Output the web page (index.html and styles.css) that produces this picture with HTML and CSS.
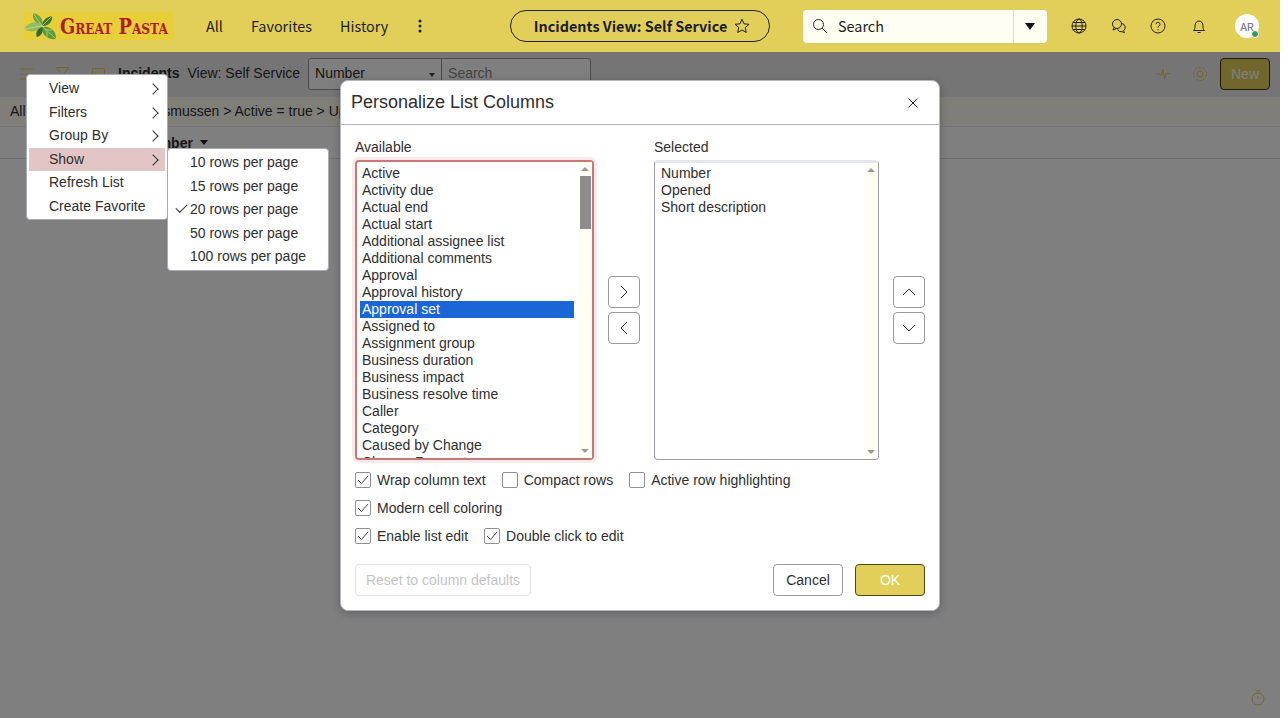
FILE: index.html
```html
<!DOCTYPE html>
<html lang="en">
  <head>
    <meta charset="UTF-8" />
    <meta name="viewport" content="width=device-width, initial-scale=1.0" />
    <title>Incidents View: Self Service</title>
    <link rel="stylesheet" href="styles.css">
  </head>
  <body>
    <div class="app">
      <header class="topbar">
        <div class="logo">
          <svg class="logo-leaf" width="34" height="28" viewBox="0 0 34 28">
            <path d="M9 1C15 2 20 7 18 14C12 12 8 7 9 1Z" fill="#6ea345" />
            <path d="M28 4C29 9 25 14 18 14C18 9 22 5 28 4Z" fill="#3f7a2c" />
            <path d="M0 17C5 9 14 8 19 14C15 20 6 21 0 17Z" fill="#93bd5c" />
            <path d="M18 15C26 13 33 20 32 27C24 28 17 23 18 15Z" fill="#5e9a3e" />
            <path d="M18 15C13 17 11 21 13 25C17 24 20 20 18 15Z" fill="#35692a" />
            <path d="M0 17L18 14L32 27M18 14L9 1M18 14L28 4M21 18L28 18M23 20L23 26" fill="none" stroke="#d5e5a8" stroke-width=".6" />
          </svg>
          <span class="logo-text">Great Pasta</span>
        </div>
        <nav class="topnav">
          <span>All</span>
          <span>Favorites</span>
          <span>History</span>
          <svg width="4" height="14" viewBox="0 0 4 14"><circle cx="2" cy="2" r="1.5" /><circle cx="2" cy="7" r="1.5" /><circle cx="2" cy="12" r="1.5" /></svg>
        </nav>
        <div class="pill">
          <b>Incidents View: Self Service</b>
          <svg width="16" height="16" viewBox="0 0 16 16"><path d="M8 1.2l2 4.6 5 .5-3.8 3.3 1.1 4.9L8 12l-4.3 2.5 1.1-4.9L1 6.3l5-.5z" fill="none" stroke="#222" /></svg>
        </div>
        <div class="search">
          <svg width="16" height="16" viewBox="0 0 16 16"><circle cx="6.5" cy="6.5" r="5" fill="none" stroke="#222" /><path d="M10.2 10.2L15 15" stroke="#222" /></svg>
          <span class="search-text">Search</span>
          <span class="search-drop"><i class="caret"></i></span>
        </div>
        <div class="top-icons">
          <svg width="16" height="16" viewBox="0 0 16 16" fill="none" stroke="#222"><circle cx="8" cy="8" r="7" /><ellipse cx="8" cy="8" rx="3.2" ry="7" /><path d="M1 8h14M2 4.5h12M2 11.5h12" /></svg>
          <svg width="16" height="16" viewBox="0 0 16 16" fill="none" stroke="#222"><circle cx="6" cy="6" r="4.5" /><path d="M3 9.5L2 12l3-1.200" /><path d="M11 5.500a4 4 0 0 1 1.500 7.200l1 2-2.500-1a4 4 0 0 1-4.500-2.500" /></svg>
          <svg class="icon-help" width="16" height="16" viewBox="0 0 16 16" fill="none" stroke="#222"><circle cx="8" cy="8" r="7" /><path d="M6 6.200a2 2 0 1 1 3 1.800c-.7.400-1 .9-1 1.700M8 11.200v1.200" /></svg>
          <svg width="16" height="16" viewBox="0 0 16 16" fill="none" stroke="#222"><path d="M2.500 12.500h11c-1.200-1-1.500-2-1.500-4.500 0-2.800-1.500-5-4-5S4 5.200 4 8c0 2.500-.3 3.500-1.500 4.500zM6.500 14.500h3" /></svg>
          <span class="avatar">AR<i class="avatar-dot"></i></span>
        </div>
      </header>

      <main class="page">
        <div class="toolbar">
          <svg class="dim-icon" width="13" height="14" viewBox="0 0 13 14"><path d="M0 2h13M0 7h9M0 12h6" /></svg>
          <svg class="dim-icon" width="13" height="16" viewBox="0 0 13 16"><path d="M.5 1.500h12L8 8v6L5 12V8z" /></svg>
          <svg class="dim-icon" width="13" height="16" viewBox="0 0 13 16"><rect x=".5" y="2.500" width="12" height="12" rx="1" /><path d="M3 6h1M6 6h1M9 6h1M3 9h1M6 9h1M9 9h1" /></svg>
          <b class="list-name">Incidents</b>
          <span class="list-view">View: Self Service</span>
          <div class="field-select">Number<i class="caret-small"></i></div>
          <div class="field-search">Search</div>
          <div class="toolbar-right">
            <svg class="dim-icon" width="16" height="16" viewBox="0 0 16 16"><path d="M1 8h4l1.500 1.500L8 3l1.500 10L11 7.500h4" /></svg>
            <svg class="dim-icon" width="16" height="16" viewBox="0 0 16 16"><circle cx="8" cy="8" r="3" /><circle cx="8" cy="8" r="6.500" stroke-dasharray="3 1" /></svg>
            <button class="btn-new">New</button>
          </div>
        </div>
        <div class="crumbs">All &gt; Assignee = Abel Rasmussen &gt; Active = true &gt; Upload</div>
        <div class="col-head"><b>Number</b><i class="caret-head"></i></div>
        <svg class="dim-icon timer" width="14" height="16" viewBox="0 0 14 16"><circle cx="7" cy="9" r="6" /><path d="M7 6v3M5 1h4" /></svg>
      </main>

      <div class="overlay">
        <section class="modal">
          <div class="modal-head">
            <h2>Personalize List Columns</h2>
            <svg width="12" height="12" viewBox="0 0 12 12"><path d="M1.500 1.500l9 9M10.500 1.500l-9 9" stroke="#222" /></svg>
          </div>
          <div class="modal-body">
            <div class="pickers">
              <div class="picker picker-available">
                <label>Available</label>
                <div class="listbox listbox-focus">
                  <ul>
                    <li>Active</li>
                    <li>Activity due</li>
                    <li>Actual end</li>
                    <li>Actual start</li>
                    <li>Additional assignee list</li>
                    <li>Additional comments</li>
                    <li>Approval</li>
                    <li>Approval history</li>
                    <li class="picked">Approval set</li>
                    <li>Assigned to</li>
                    <li>Assignment group</li>
                    <li>Business duration</li>
                    <li>Business impact</li>
                    <li>Business resolve time</li>
                    <li>Caller</li>
                    <li>Category</li>
                    <li>Caused by Change</li>
                    <li>Change Request</li>
                  </ul>
                  <div class="scroll">
                    <i class="arrow-up"></i>
                    <span class="thumb"></span>
                    <i class="arrow-down"></i>
                  </div>
                </div>
              </div>
              <div class="movers">
                <button class="square"><svg width="12" height="14" viewBox="0 0 12 14"><path d="M3 1l6 6-6 6" /></svg></button>
                <button class="square"><svg width="12" height="14" viewBox="0 0 12 14"><path d="M9 1L3 7l6 6" /></svg></button>
              </div>
              <div class="picker picker-selected">
                <label>Selected</label>
                <div class="listbox listbox-plain">
                  <ul>
                    <li>Number</li>
                    <li>Opened</li>
                    <li>Short description</li>
                  </ul>
                  <div class="scroll">
                    <i class="arrow-up"></i>
                    <span class="thumb thumb-none"></span>
                    <i class="arrow-down"></i>
                  </div>
                </div>
              </div>
              <div class="movers">
                <button class="square"><svg width="14" height="12" viewBox="0 0 14 12"><path d="M1 9l6-6 6 6" /></svg></button>
                <button class="square"><svg width="14" height="12" viewBox="0 0 14 12"><path d="M1 3l6 6 6-6" /></svg></button>
              </div>
            </div>

            <div class="options">
              <div class="option-row">
                <span class="check on">Wrap column text</span>
                <span class="check">Compact rows</span>
                <span class="check">Active row highlighting</span>
              </div>
              <div class="option-row">
                <span class="check on">Modern cell coloring</span>
              </div>
              <div class="option-row">
                <span class="check on">Enable list edit</span>
                <span class="check on">Double click to edit</span>
              </div>
            </div>

            <div class="modal-foot">
              <button class="btn btn-reset">Reset to column defaults</button>
              <button class="btn btn-cancel">Cancel</button>
              <button class="btn btn-ok">OK</button>
            </div>
          </div>
        </section>
      </div>

      <ul class="menu menu-main">
        <li>View</li>
        <li>Filters</li>
        <li>Group By</li>
        <li class="active">Show</li>
        <li class="plain">Refresh List</li>
        <li class="plain">Create Favorite</li>
      </ul>
      <ul class="menu menu-sub">
        <li>10 rows per page</li>
        <li>15 rows per page</li>
        <li class="checked">20 rows per page</li>
        <li>50 rows per page</li>
        <li>100 rows per page</li>
      </ul>
    </div>
  </body>
</html>
```

FILE: styles.css
```css
*,
*::before,
*::after {
  box-sizing: border-box;
}

html,
body {
  margin: 0;
  padding: 0;
  height: 100%;
  overflow: hidden;
}

body {
  font-family: "Liberation Sans", Arial, sans-serif;
  font-size: 14px;
  color: #2e2e2e;
  background: #fff;
}

.app {
  position: relative;
  width: 1280px;
  height: 718px;
  overflow: hidden;
}

/* top bar */
.topbar {
  display: flex;
  align-items: center;
  height: 52px;
  padding-left: 24px;
  background-color: #e2cf5a;
  font-family: "Noto Sans CJK JP", "Noto Sans", sans-serif;
  font-size: 14.4px;
  color: #1c1c1c;
  position: relative;
  z-index: 3;
}

.logo {
  display: flex;
  align-items: center;
  flex: none;
  width: 150px;
  height: 28px;
  background-color: #e8cf38;
}

.logo-leaf {
  flex: none;
}

.logo-text {
  display: inline-block;
  margin-left: 2px;
  font-family: "DejaVu Serif", "Liberation Serif", serif;
  font-stretch: condensed;
  font-weight: bold;
  font-variant: small-caps;
  font-size: 22px;
  color: #b01b22;
  white-space: nowrap;
  transform: scaleX(0.9);
  transform-origin: left center;
}

.topnav {
  display: flex;
  align-items: center;
  flex: none;
  gap: 28px;
  margin-left: 32px;
  width: 304px;
}

.topnav span,
.pill b,
.search-text {
  padding-bottom: 2px;
}

.topnav svg {
  margin-left: 2px;
  fill: #1c1c1c;
}

.pill {
  display: flex;
  align-items: center;
  justify-content: center;
  flex: none;
  gap: 7px;
  width: 260px;
  height: 32px;
  padding-left: 4px;
  border: 1px solid #222;
  border-radius: 16px;
}

.search {
  display: flex;
  align-items: center;
  flex: none;
  width: 244px;
  height: 33px;
  margin-left: 33px;
  padding-left: 9px;
  background-color: #fffef3;
  border-radius: 4px;
  box-shadow: 0 0 1px #bbb;
}

.search-text {
  flex: 1;
  margin-left: 10px;
}

.search-drop {
  display: flex;
  align-items: center;
  justify-content: center;
  width: 34px;
  height: 100%;
  padding-right: 1px;
  border-left: 1px solid #dedcc8;
}

.caret {
  width: 0;
  height: 0;
  border-left: 5.5px solid transparent;
  border-right: 5.5px solid transparent;
  border-top: 7px solid #111;
}

.top-icons {
  display: flex;
  align-items: center;
  gap: 24px;
  margin-left: 24px;
}

.icon-help {
  margin-left: -1px;
  margin-right: 1px;
}

.avatar {
  position: relative;
  display: flex;
  align-items: center;
  justify-content: center;
  width: 24px;
  height: 24px;
  margin-left: 4px;
  border-radius: 50%;
  background-color: #fff;
  font-size: 11px;
  color: #667;
}

.avatar-dot {
  position: absolute;
  right: 0;
  bottom: 0;
  width: 8px;
  height: 8px;
  border-radius: 50%;
  border: 1px solid #fff;
  background-color: #2e9e5b;
}

/* list page behind the dialog */
.page {
  position: relative;
  height: 666px;
}

.toolbar {
  display: flex;
  align-items: center;
  height: 45px;
  padding: 0 10px 1px 20px;
  background-color: #ebebeb;
}

.dim-icon {
  flex: none;
  fill: none;
  stroke: #e2cf5a;
}

.toolbar > .dim-icon {
  margin-right: 23px;
}

.toolbar > .dim-icon:nth-child(3) {
  margin-right: 13px;
}

.list-name {
  margin-right: 8px;
  margin-bottom: 2px;
}

.list-view {
  margin-right: 8px;
  margin-bottom: 2px;
}

.field-select,
.field-search {
  position: relative;
  height: 32px;
  padding: 6px 6px;
  border: 1px solid #999;
  background-color: #fff;
}

.field-select {
  width: 134px;
  border-radius: 3px 0 0 3px;
}

.field-search {
  width: 150px;
  margin-left: -1px;
  border-radius: 0 3px 3px 0;
  color: #888;
}

.caret-small {
  position: absolute;
  right: 6px;
  top: 14px;
  border-left: 3px solid transparent;
  border-right: 3px solid transparent;
  border-top: 4px solid #444;
}

.toolbar-right {
  display: flex;
  align-items: center;
  gap: 21px;
  margin-left: auto;
}

.btn-new {
  width: 50px;
  height: 32px;
  margin-left: -9px;
  border: 1px solid #3d3810;
  border-radius: 4px;
  background-color: #e2cf5a;
  color: #fff;
  font: 14px "Liberation Sans", Arial, sans-serif;
}

.crumbs {
  height: 30px;
  padding: 6px 10px;
  background-color: #fffdf0;
  border-bottom: 1px solid #e6e6e6;
  white-space: nowrap;
}

.col-head {
  display: flex;
  align-items: center;
  gap: 7px;
  height: 32px;
  padding-left: 140px;
  border-bottom: 1px solid #ddd;
}

.caret-head {
  border-left: 4px solid transparent;
  border-right: 4px solid transparent;
  border-top: 5px solid #222;
}

.timer {
  position: absolute;
  right: 15px;
  bottom: 12px;
}

/* dialog */
.overlay {
  position: absolute;
  left: 0;
  right: 0;
  top: 52px;
  bottom: 0;
  z-index: 1;
  display: flex;
  justify-content: center;
  padding-top: 28px;
  background-color: rgba(0, 0, 0, 0.5);
}

.modal {
  width: 600px;
  height: 531px;
  background-color: #fff;
  border: 1px solid #b4b6c0;
  border-radius: 8px;
  box-shadow: 0 2px 8px rgba(0, 0, 0, 0.25);
}

.modal-head {
  display: flex;
  align-items: center;
  justify-content: space-between;
  height: 44px;
  padding: 0 20px 0 10px;
  border-bottom: 1px solid #b0b2bc;
}

.modal-head h2 {
  margin: 0;
  font-size: 18px;
  font-weight: normal;
}

.modal-body {
  padding: 14px 14px 0;
}

.pickers {
  display: flex;
  gap: 14px;
}

.picker label {
  display: block;
  height: 21px;
  line-height: 16px;
}

.picker-available {
  width: 239px;
}

.picker-selected {
  width: 225px;
}

.listbox {
  display: flex;
  height: 300px;
  overflow: hidden;
  border-radius: 4px;
  background-color: #fff;
}

.listbox ul {
  flex: 1;
  margin: 0;
  padding: 4px 5px 0 4px;
  list-style: none;
  overflow: hidden;
}

.listbox li {
  height: 17px;
  line-height: 17px;
  padding-left: 2px;
  white-space: nowrap;
}

.listbox li.picked {
  background-color: #1a66d6;
  color: #fff;
}

.listbox-focus {
  border: 2px solid #c57878;
  box-shadow: 0 0 0 3px #f8eaea;
  overflow: visible;
}

.listbox-focus ul {
  padding: 3px 4px 0 3px;
}

.listbox-plain {
  border: 1px solid #9a9ca6;
  border-top: 3px solid #e4e6ea;
}

.listbox-plain ul {
  padding-top: 2px;
}

.scroll {
  display: flex;
  flex-direction: column;
  align-items: center;
  flex: none;
  width: 14px;
  background-color: #fffef4;
}

.thumb {
  flex: none;
  width: 11px;
  height: 53px;
  margin: 0 0 auto;
  background-color: #8c8c8c;
}

.thumb-none {
  background-color: transparent;
}

.arrow-up,
.arrow-down {
  flex: none;
  margin: 5px 0;
  border-left: 4px solid transparent;
  border-right: 4px solid transparent;
}

.arrow-up {
  border-bottom: 4px solid #9a9a9a;
}

.arrow-down {
  border-top: 4px solid #9a9a9a;
}

.movers {
  display: flex;
  flex-direction: column;
  justify-content: center;
  gap: 4px;
  height: 300px;
  margin-top: 21px;
}

.square {
  display: flex;
  align-items: center;
  justify-content: center;
  width: 32px;
  height: 32px;
  padding: 0;
  background-color: #fff;
  border: 1px solid #999;
  border-radius: 4px;
}

.square svg {
  fill: none;
  stroke: #2e2e2e;
}

.options {
  display: flex;
  flex-direction: column;
  gap: 12px;
  margin-top: 12px;
}

.option-row {
  display: flex;
  gap: 16px;
}

.check {
  display: flex;
  align-items: center;
  gap: 6px;
  height: 16px;
}

.check::before {
  content: "";
  flex: none;
  width: 16px;
  height: 16px;
  border: 1px solid #8e8e96;
  border-radius: 2px;
  background: #fff no-repeat center;
}

.check.on::before {
  background-image: url("data:image/svg+xml,%3Csvg xmlns='http://www.w3.org/2000/svg' width='12' height='10' viewBox='0 0 12 10'%3E%3Cpath d='M1 5l3.500 3.500L11 1' fill='none' stroke='%23444'/%3E%3C/svg%3E");
}

.modal-foot {
  display: flex;
  gap: 12px;
  margin-top: 20px;
}

.btn {
  height: 32px;
  padding: 0;
  border-radius: 4px;
  font: 14px "Liberation Sans", Arial, sans-serif;
}

.btn-reset {
  width: 176px;
  margin-right: auto;
  background-color: #fff;
  border: 1px solid #e2e2e2;
  color: #c4c4c4;
}

.btn-cancel {
  width: 70px;
  background-color: #fff;
  border: 1px solid #999;
  color: #2e2e2e;
}

.btn-ok {
  width: 70px;
  background-color: #e2cf5a;
  border: 1px solid #4d4716;
  color: #fff;
}

/* context menus */
.menu {
  position: absolute;
  z-index: 2;
  margin: 0;
  padding: 2px;
  list-style: none;
  background-color: #fff;
  border: 1px solid #a8aab4;
  border-radius: 4px;
  color: #2e2e2e;
}

.menu li {
  position: relative;
  height: 23.500px;
  line-height: 23px;
  white-space: nowrap;
}

.menu-main {
  left: 26px;
  top: 74px;
  width: 142px;
  height: 146px;
}

.menu-main li {
  padding-left: 20px;
}

.menu-main li::after {
  content: "";
  position: absolute;
  right: 8px;
  top: 8px;
  width: 8px;
  height: 8px;
  border-top: 1px solid #333;
  border-right: 1px solid #333;
  transform: rotate(45deg);
}

.menu-main li.plain::after {
  display: none;
}

.menu-main li.active {
  background-color: #e4c5c5;
}

.menu-sub {
  left: 167px;
  top: 148px;
  width: 162px;
  height: 123px;
}

.menu-sub li {
  padding-left: 20px;
}

.menu-sub li.checked::before {
  content: "";
  position: absolute;
  left: 6px;
  top: 6px;
  width: 11px;
  height: 6px;
  border-left: 1px solid #333;
  border-bottom: 1px solid #333;
  transform: rotate(-45deg);
}
```
